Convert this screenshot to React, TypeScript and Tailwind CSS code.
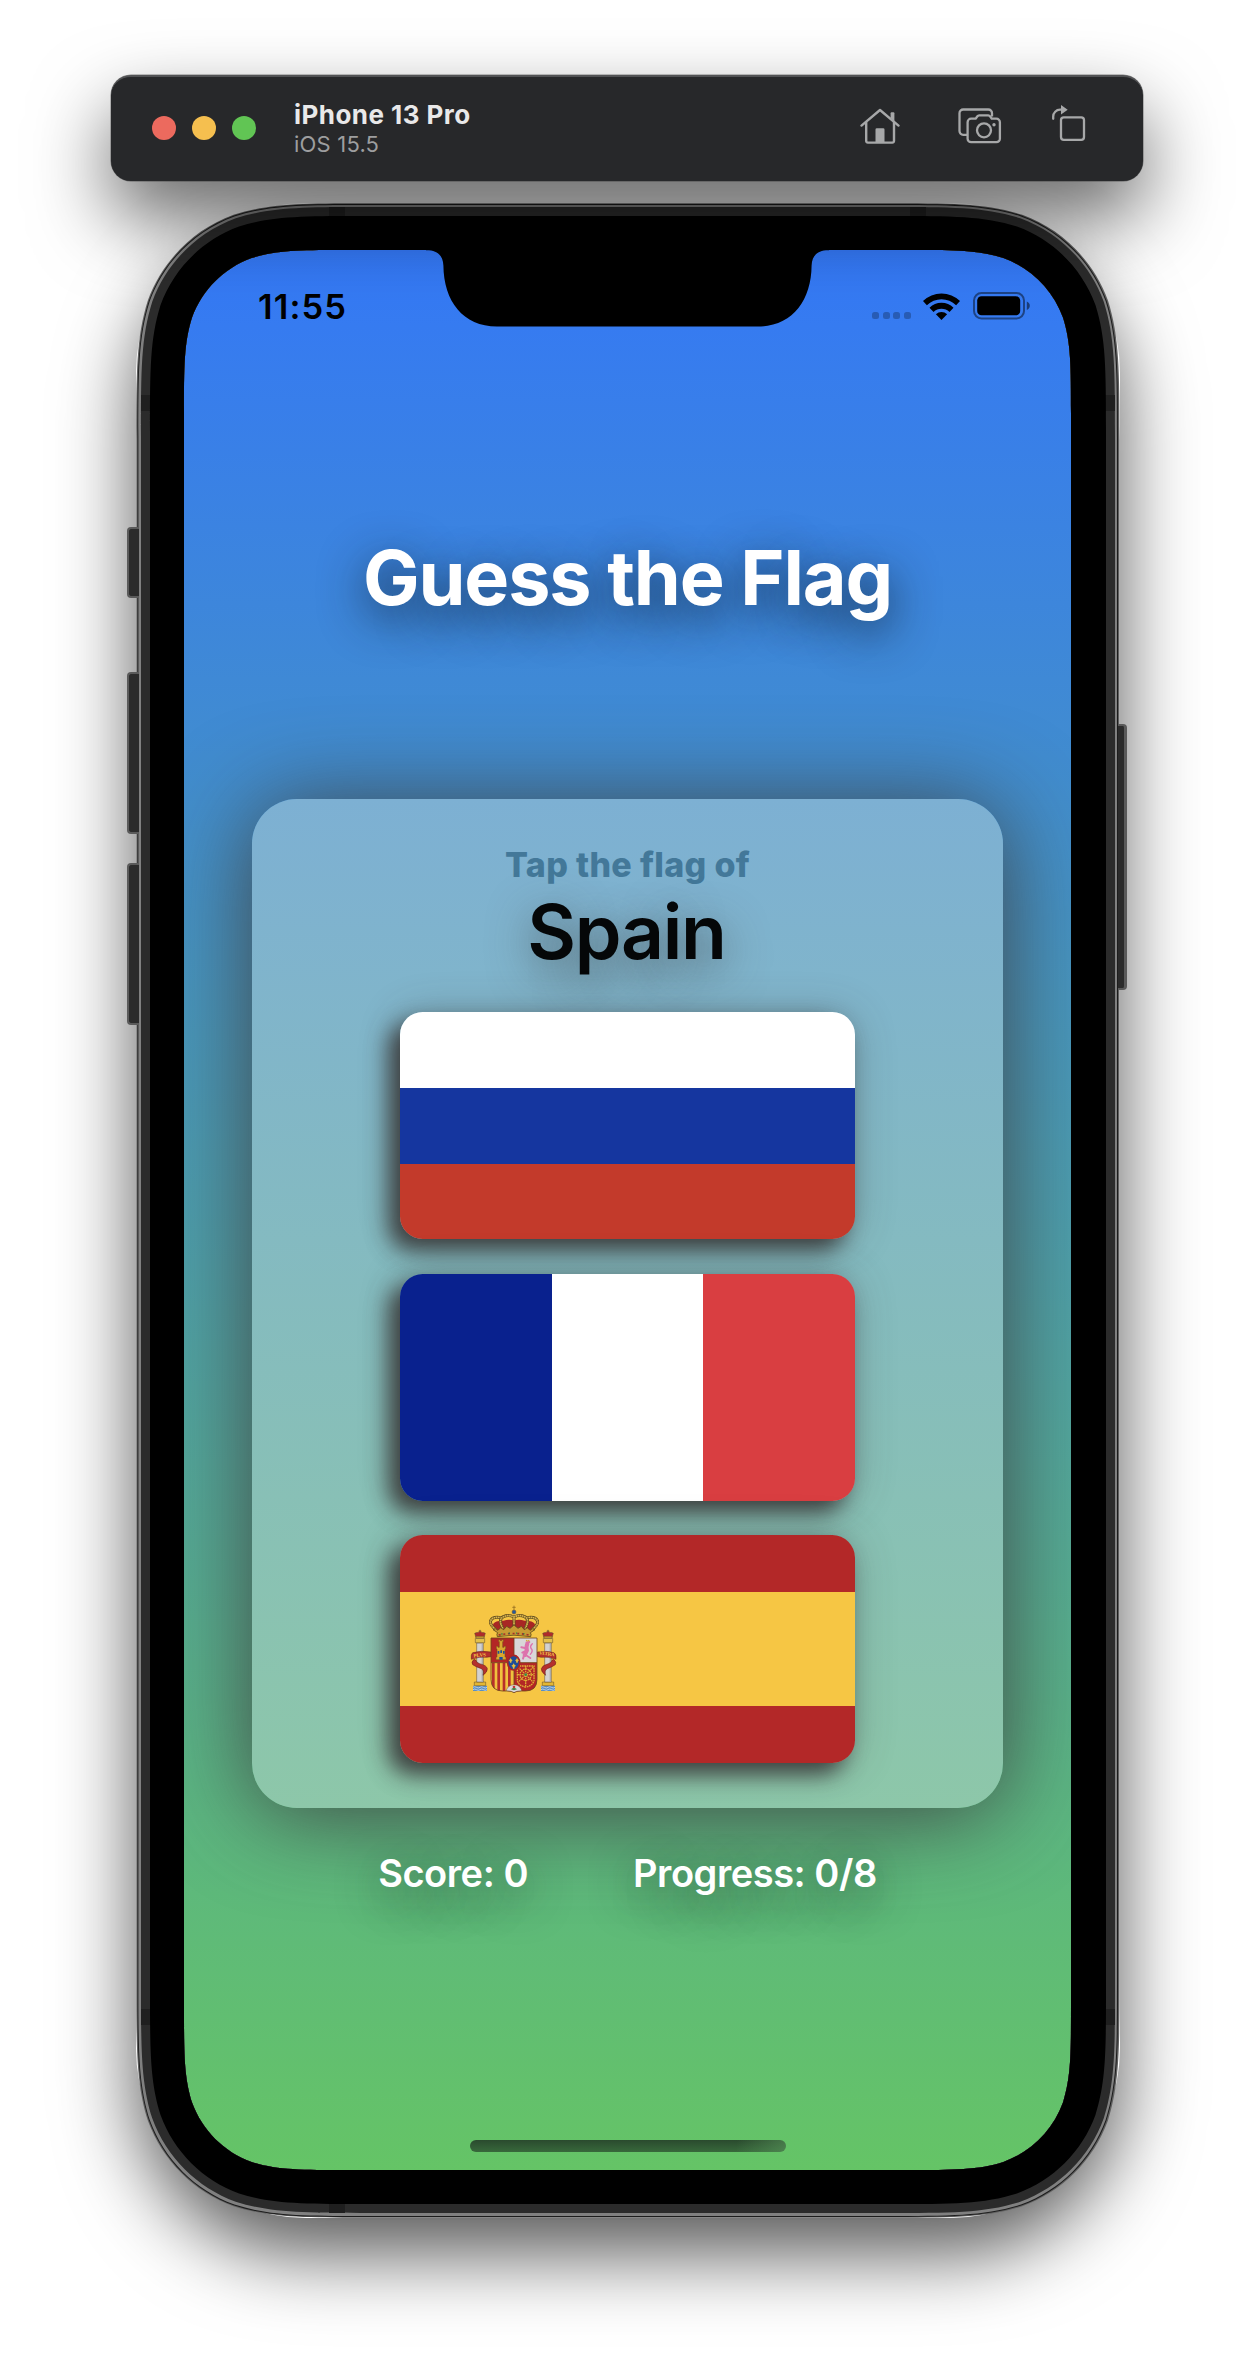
import React from "react";

/** Rounded rectangle with continuous-curvature corners, as used by iOS hardware. */
function squircle(x: number, y: number, w: number, h: number, r: number): string {
  const a = 1.52866498 * r;
  const b = 1.08849296 * r;
  const c = 0.86840694 * r;
  const d = 0.63149379 * r;
  const e = 0.07491139 * r;
  const f = 0.37282383 * r;
  const g = 0.16905956 * r;
  const R = x + w;
  const B = y + h;
  return [
    `M${x + a},${y}H${R - a}`,
    `C${R - b},${y} ${R - c},${y} ${R - d},${y + e}`,
    `C${R - f},${y + g} ${R - g},${y + f} ${R - e},${y + d}`,
    `C${R},${y + c} ${R},${y + b} ${R},${y + a}V${B - a}`,
    `C${R},${B - b} ${R},${B - c} ${R - e},${B - d}`,
    `C${R - g},${B - f} ${R - f},${B - g} ${R - d},${B - e}`,
    `C${R - c},${B} ${R - b},${B} ${R - a},${B}H${x + a}`,
    `C${x + b},${B} ${x + c},${B} ${x + d},${B - e}`,
    `C${x + f},${B - g} ${x + g},${B - f} ${x + e},${B - d}`,
    `C${x},${B - c} ${x},${B - b} ${x},${B - a}V${y + a}`,
    `C${x},${y + b} ${x},${y + c} ${x + e},${y + d}`,
    `C${x + g},${y + f} ${x + f},${y + g} ${x + d},${y + e}`,
    `C${x + c},${y} ${x + b},${y} ${x + a},${y}Z`,
  ].join("");
}

const SCREEN = squircle(48, 47, 887, 1920, 107);

function HomeIcon() {
  return (
    <svg width="40" height="36" viewBox="0 0 40 36" fill="none" stroke="#a7a8a9" strokeWidth="2.4" strokeLinejoin="round" strokeLinecap="round">
      <path d="M1.5 17.6 20 2 38.5 17.6" />
      <path d="M6.2 14.5V33a1.6 1.6 0 0 0 1.6 1.6h24.6A1.6 1.6 0 0 0 34 33V14.5" />
      <path d="M15.5 21.5a1.3 1.3 0 0 1 1.3-1.3h6.4a1.3 1.3 0 0 1 1.3 1.3V35h-9z" fill="#a7a8a9" stroke="none" />
      <path d="M30.6 10V5.2a1 1 0 0 1 1-1h1.8a1 1 0 0 1 1 1v8.4z" fill="#a7a8a9" stroke="none" />
    </svg>
  );
}

function ScreenshotIcon() {
  return (
    <svg width="44" height="36" viewBox="0 0 44 36" fill="none" stroke="#a7a8a9" strokeWidth="2.300" strokeLinejoin="round">
      <path d="M9.5 26.8H5.2A3.7 3.7 0 0 1 1.5 23.100V5.200A3.700 3.700 0 0 1 5.200 1.500H30.300A3.700 3.700 0 0 1 34 5.200V8.500" />
      <path d="M9.600 14.200a3.500 3.500 0 0 1 3.500-3.500h4.600l1.500-2.200c.5-.7 1.200-1.100 2-1.100h9c.8 0 1.500.4 2 1.100l1.500 2.200h4.700a3.500 3.500 0 0 1 3.500 3.500v16.500a3.500 3.500 0 0 1-3.500 3.500H13.100a3.500 3.500 0 0 1-3.500-3.500z" />
      <circle cx="26" cy="22.300" r="7" />
      <circle cx="36" cy="16.700" r="1.700" fill="#a7a8a9" stroke="none" />
    </svg>
  );
}

function RotateIcon() {
  return (
    <svg width="36" height="38" viewBox="0 0 36 38" fill="none" stroke="#a7a8a9" strokeWidth="2.300" strokeLinecap="round">
      <rect x="10" y="14.300" width="23" height="22.500" rx="2.800" />
      <path d="M2.200 15.800V13.500A6.800 6.800 0 0 1 9 6.700h2" />
      <path d="M10 1.900v9.600l6.700-4.800z" fill="#a7a8a9" stroke="none" />
    </svg>
  );
}

function WifiIcon() {
  return (
    <svg width="37" height="27" viewBox="0 0 37 27">
      <path d="M0 8.100a26.500 26.500 0 0 1 37 0l-3.900 4.200a20.800 20.800 0 0 0-29.200 0z" />
      <path d="M6.500 14.700a17.200 17.200 0 0 1 24 0l-4 4.200a11.500 11.500 0 0 0-16 0z" />
      <path d="M12.900 21.200a8.200 8.200 0 0 1 11.200 0L18.500 27z" />
    </svg>
  );
}

function BatteryIcon() {
  return (
    <svg width="58" height="28" viewBox="0 0 58 28">
      <rect x="1" y="1" width="50" height="25.500" rx="7.500" fill="none" stroke="#000" strokeOpacity="0.45" strokeWidth="2" />
      <rect x="4.200" y="4.300" width="43" height="19" rx="4.300" />
      <path d="M53.800 9.600c1.900.8 3 2.300 3 4.100s-1.100 3.400-3 4.200z" fillOpacity="0.5" />
    </svg>
  );
}

function Toolbar() {
  return (
    <header className="z-10 ml-[111px] flex h-[106px] w-[1032px] items-center rounded-[20px] border-t-2 border-[#515254] bg-[#27282a] pb-[2px] pl-[41px] pr-[56px] shadow-[0_0_0_0.5px_rgba(30,30,30,0.5),0_36px_78px_rgba(0,0,0,0.6)]">
      <div className="flex gap-4">
        <span className="size-6 rounded-full bg-[#ec6a5e]" />
        <span className="size-6 rounded-full bg-[#f5bf4f]" />
        <span className="size-6 rounded-full bg-[#61c554]" />
      </div>
      <div className="ml-[38px] flex flex-col pt-[1px]">
        <h1 className="text-[26px] font-bold leading-[30px] tracking-[0.450px] text-[#e9e9e9]">iPhone 13 Pro</h1>
        <p className="text-[22px] leading-[28px] tracking-[0.200px] text-[#9d9e9f]">iOS 15.5</p>
      </div>
      <div className="ml-auto flex items-center pb-[4px]">
        <HomeIcon />
        <div className="ml-[58px] flex">
          <ScreenshotIcon />
        </div>
        <div className="ml-[49px] flex pb-2">
          <RotateIcon />
        </div>
      </div>
    </header>
  );
}

/** Metal frame, black bezel and notch, drawn over the screen content. */
function DeviceFrame() {
  return (
    <svg className="pointer-events-none absolute inset-0" width="984" height="2015" viewBox="0 0 984 2015">
      <path fillRule="evenodd" fill="#5f5f5f" d={squircle(0.3, 0.3, 983.2, 2014.400, 154) + SCREEN} />
      <path fillRule="evenodd" fill="#1c1c1c" d={squircle(1.500, 1, 980.500, 2013, 153) + SCREEN} />
      <path fillRule="evenodd" fill="#808080" d={squircle(2.400, 2, 978.600, 2011, 152) + SCREEN} />
      <path fillRule="evenodd" fill="#2b2b2b" d={squircle(5, 4, 974, 2006, 150) + SCREEN} />
      <g fill="#1f1f1f">
        <rect x="193" y="4" width="16" height="10" />
        <rect x="774" y="4" width="16" height="10" />
        <rect x="193" y="2000" width="16" height="10" />
        <rect x="5" y="192" width="10" height="16" />
        <rect x="969" y="192" width="10" height="16" />
        <rect x="5" y="1806" width="10" height="16" />
        <rect x="969" y="1806" width="10" height="16" />
      </g>
      <path fillRule="evenodd" fill="#000" d={squircle(14, 13, 956, 1988, 141) + SCREEN} />
      <path
        fill="#000"
        d="M290 46V47.200C301 47 307 52 307.400 62.500C307.700 98 327 123.500 361 123.500H622C656 123.500 675.300 98 675.600 62.500C676 52 682 47 693 47.200V46Z"
      />
    </svg>
  );
}

function StatusBar() {
  return (
    <div className="flex h-[113px] items-center pl-[74px] pr-[40px] text-black">
      <span className="pt-[2px] text-[34.500px] font-semibold leading-none tracking-[1.100px]">11:55</span>
      <div className="ml-auto flex items-end pb-[1px]">
        <div className="flex gap-[3.600px] pb-[1px]">
          <span className="size-[7px] rounded-[2.500px] bg-black/25" />
          <span className="size-[7px] rounded-[2.500px] bg-black/25" />
          <span className="size-[7px] rounded-[2.500px] bg-black/25" />
          <span className="size-[7px] rounded-[2.500px] bg-black/25" />
        </div>
        <div className="ml-[12px]">
          <WifiIcon />
        </div>
        <div className="ml-[13px]">
          <BatteryIcon />
        </div>
      </div>
    </div>
  );
}

function Pillar({ x }: { x: number }) {
  return (
    <g transform={`translate(${x} 0)`} stroke="#5c4a2e" strokeWidth="1.500">
      <path d="M-21 318h42v16h-42z" fill="#5b8fc4" stroke="none" />
      <path d="M-21 323q5-4 10.500 0t10.500 0 10.500 0 10.500 0M-21 330q5-4 10.500 0t10.500 0 10.500 0 10.500 0" stroke="#e8eef2" fill="none" strokeWidth="2" />
      <path d="M-17 307h34v11h-34z" fill="#e3b733" />
      <path d="M-10 190h20v117h-20z" fill="#d3d2d0" />
      <path d="M5 191h4v115h-4z" fill="#a9a9ab" stroke="none" />
      <path d="M-14 176h28v13h-28z" fill="#e3c04b" />
      <path d="M-12 174-16 161q6-4 10-2 3-5 6-5t6 5q5-2 10 2l-4 13z" fill="#b02c2b" />
      <path d="M-12 170h24v5h-24z" fill="#dfb02f" />
      <circle cy="154" r="2.500" fill="#cfa22d" />
    </g>
  );
}

function CoatOfArms() {
  return (
    <svg width="90" height="90" viewBox="90 70 270 270">
      <Pillar x={120} />
      <Pillar x={324} />
      {/* Motto ribbons wound round the pillars */}
      <g fill="#b5302d" stroke="#5d1f1b" strokeWidth="1.500">
        <path d="M153 217q-28-5-55 2-6 4-4 20 25-9 46-6l13-2z" />
        <path d="M102 239q-10 9-4 16 8 6 26 12 10 5 5 20 14-10 13-20-2-10-23-15-10-3-11-10z" />
        <path d="M292 217q28-5 50 2 8 4 6 20-25-9-44-6l-12-2z" />
        <path d="M341 239q10 9 5 16-8 6-24 12-10 5-5 20-14-10-13-20 2-10 21-15 10-3 11-10z" />
      </g>
      <g fill="#f0c64a" fontFamily="Liberation Serif, serif" fontWeight="700" fontSize="15">
        <text x="101" y="231" transform="rotate(-6 122 228)">PLVS</text>
        <text x="297" y="227" transform="rotate(7 320 226)" textLength="46">VLTRA</text>
      </g>
      {/* Shield */}
      <clipPath id="shield">
        <path d="M153 175h138v124q0 35-35 35h-12q-16 0-22 5-6-5-22-5h-12q-35 0-35-35z" />
      </clipPath>
      <g clipPath="url(#shield)">
        <path d="M153 175h69v74h-69z" fill="#b32625" />
        <path d="M222 175h69v74h-69z" fill="#d9d7d8" />
        <path d="M153 249h69v95h-69z" fill="#f0c13e" />
        <path d="M160 249v95M176 249v95M192 249v95M208 249v95" stroke="#b8302a" strokeWidth="8" />
        <path d="M222 249h69v95h-69z" fill="#b32625" />
        <path d="M197 340q4-25 25-25t25 25z" fill="#d9d7d8" stroke="#8b5a2b" strokeWidth="1.500" />
      </g>
      <path d="M153 175h138v124q0 35-35 35h-12q-16 0-22 5-6-5-22-5h-12q-35 0-35-35zM222 175v74M153 249h138M222 249v67" fill="none" stroke="#70431f" strokeWidth="2.500" />
      {/* Castle */}
      <g fill="#d9a72f" stroke="#71511d" strokeWidth="1.500">
        <path d="M168 240v-8h3v-24h-2v-8h5v3h4v-17h-2v-6h5v3h4v-3h5v6h-2v17h4v-3h5v8h-2v24h3v8z" />
        <path d="M178 232h10v8h-10z" fill="#1c4f9c" stroke="none" />
        <path d="M173 214h5v8h-5zM181 212h5v8h-5zM189 214h5v8h-5z" fill="#1c4f9c" stroke="none" />
      </g>
      {/* Lion */}
      <g fill="none" stroke="#dd73ad" strokeLinecap="round" strokeLinejoin="round">
        <path d="M262 192q-5 13-1 20l-7 14" strokeWidth="12" />
        <path d="M258 206l-14-3M259 213l-12 6M257 226l14 9M253 225l-4 12M268 187l-8 2" strokeWidth="6" />
        <path d="M271 224q10-10 2-18-4-7 4-14" strokeWidth="4" />
      </g>
      <path d="M257 185l2-5 4 3 4-3 2 5z" fill="#d5a32b" />
      {/* Chains of Navarre */}
      <g stroke="#dfae35" fill="none" strokeWidth="4" strokeDasharray="5 2">
        <path d="M232 259h50v45q-5 15-25 18-20-3-25-18z" />
        <circle cx="257" cy="285" r="17" />
        <path d="M257 259v62M232 285h50M234 262l46 46M280 262l-46 46" />
      </g>
      <circle cx="257" cy="285" r="4" fill="#3a8a4a" />
      {/* Pomegranate */}
      <path d="M222 331v-8" stroke="#3a7a3f" strokeWidth="3" />
      <path d="M213 329l9-6 9 6-9 3z" fill="#3f8847" />
      <circle cx="222" cy="322" r="4" fill="#c33a35" />
      {/* Bourbon escutcheon */}
      <ellipse cx="221" cy="249" rx="18" ry="22" fill="#1d4d98" stroke="#a92523" strokeWidth="5" />
      <g fill="#e9bb3e">
        <path d="M212 235l3 5 3 2-3 2-1 5h-4l-1-5-3-2 3-2zM231 235l3 5 3 2-3 2-1 5h-4l-1-5-3-2 3-2zM221 251l3 5 4 2-4 3-1 6h-4l-1-6-4-3 4-2z" />
      </g>
      {/* Crown */}
      <path d="M168 154q-12-12-8-22 7-10 30-9 18-6 32 0 14-6 32 0 23-1 30 9 4 10-8 22z" fill="#a82624" />
      <g fill="none" stroke="#5f4a1d" strokeWidth="9">
        <path d="M168 150q-20-15-16-27 6-13 30-9M276 150q20-15 16-27-6-13-30-9" />
        <path d="M189 147q-16-27 1-36 16-7 32 1 16-8 32-1 17 9 1 36M222 146v-38" />
      </g>
      <g fill="none" stroke="#d9b650" strokeWidth="5">
        <path d="M168 150q-20-15-16-27 6-13 30-9M276 150q20-15 16-27-6-13-30-9" strokeDasharray="5 1.500" />
        <path d="M189 147q-16-27 1-36 16-7 32 1 16-8 32-1 17 9 1 36M222 146v-38" strokeDasharray="5 1.500" />
      </g>
      <path d="M172 171q-3-8 1-12l-14-9 8-3 7 5 8-8 9 6 9-10 10 6 12-10 12 10 10-6 9 10 9-6 8 8 7-5 8 3-14 9q4 4 1 12-50-9-100 0z" fill="#c79a33" stroke="#5f4a1d" strokeWidth="2.500" />
      <path d="M176 166q46-9 92 0" stroke="#a52c2b" strokeWidth="5" strokeDasharray="6 8" fill="none" />
      <path d="M184 163q38-6 80 1" stroke="#2d7d4a" strokeWidth="4" strokeDasharray="4 18" fill="none" />
      <circle cx="222" cy="97" r="6" fill="#27599b" stroke="#7a5a20" strokeWidth="1.500" />
      <path d="M222 91V78M217 83h10" stroke="#a27a25" strokeWidth="3" />
    </svg>
  );
}

const FLAG_SHELL =
  "h-[227.400px] w-[455px] overflow-hidden rounded-[22.700px] shadow-[-11px_11px_22px_rgba(58,58,58,0.95),0_2px_40px_rgba(64,64,64,0.3)]";

function RussiaFlag() {
  return (
    <button aria-label="Russia" className={`${FLAG_SHELL} flex flex-col`}>
      <span className="w-full flex-1 bg-white" />
      <span className="w-full flex-1 bg-[#15369f]" />
      <span className="w-full flex-1 bg-[#c33a2b]" />
    </button>
  );
}

function FranceFlag() {
  return (
    <button aria-label="France" className={`${FLAG_SHELL} flex`}>
      <span className="h-full flex-1 bg-[#09218e]" />
      <span className="h-full flex-1 bg-white" />
      <span className="h-full flex-1 bg-[#d93e41]" />
    </button>
  );
}

function SpainFlag() {
  return (
    <button aria-label="Spain" className={`${FLAG_SHELL} flex flex-col`}>
      <span className="h-1/4 w-full bg-[#b32828]" />
      <span className="flex h-1/2 w-full items-start bg-[#f6c644] pl-[70px] pt-[10.500px]">
        <CoatOfArms />
      </span>
      <span className="h-1/4 w-full bg-[#b32828]" />
    </button>
  );
}

function FlagCard() {
  return (
    <section className="ml-[68px] mt-[122px] flex h-[1009px] w-[751px] flex-col items-center rounded-[45px] bg-linear-to-b/srgb from-[#7db0d3] to-[#8dc7a9] shadow-[0_6px_92px_rgba(62,62,62,0.92)]">
      <p className="mt-[45px] text-[34px] font-extrabold leading-[41px] tracking-[0.350px] text-[#437899]">Tap the flag of</p>
      <h3 className="-ml-[2px] mt-px text-[75px] font-semibold leading-[92px] tracking-[-1.300px] text-[#050708] [text-shadow:0_12px_44px_rgba(64,64,64,0.75)]">Spain</h3>
      <div className="mt-[34px] flex flex-col gap-[34.200px]">
        <RussiaFlag />
        <FranceFlag />
        <SpainFlag />
      </div>
    </section>
  );
}

function Screen() {
  return (
    <main className="flex h-[1920px] w-[887px] flex-col overflow-hidden bg-linear-to-b/srgb from-[#3478f6] to-[#65c466]">
      <StatusBar />
      <h2 className="mt-[170px] text-center text-[75.500px] font-bold leading-[90px] tracking-[-1.150px] text-white [text-shadow:0_12px_46px_rgba(15,30,45,0.9)]">
        Guess the Flag
      </h2>
      <div className="mt-[54px]">
        <FlagCard />
      </div>
      <div className="mt-[42px] flex justify-center gap-[105px] text-[38px] font-semibold leading-[46px] tracking-[-0.450px] text-white [text-shadow:0_12px_44px_rgba(30,50,40,0.8)]">
        <span>Score: 0</span>
        <span>Progress: 0/8</span>
      </div>
      <div className="mb-[18px] mt-auto h-3 w-[316px] self-center rounded-full bg-[linear-gradient(100deg,transparent_84%,rgba(90,150,92,0.6)),linear-gradient(180deg,#2a4a2e,#38683b)]" />
    </main>
  );
}

function Phone() {
  return (
    <div className="relative ml-[136px] mt-[22px] h-[2015px] w-[984px]">
      {/* Side buttons */}
      <div className="absolute left-[-9px] top-[324px] z-10 flex flex-col">
        <span className="h-[71px] w-[12px] rounded-l-[4px] border-2 border-r-0 border-[#5a5a5a] bg-[#2b2b2b]" />
        <span className="mt-[74px] h-[162px] w-[12px] rounded-l-[4px] border-2 border-r-0 border-[#5a5a5a] bg-[#2b2b2b]" />
        <span className="mt-[29px] h-[162px] w-[12px] rounded-l-[4px] border-2 border-r-0 border-[#5a5a5a] bg-[#2b2b2b]" />
      </div>
      <span className="absolute right-[-6.500px] top-[521px] z-10 h-[266px] w-[9px] rounded-r-[4px] border-2 border-l-0 border-r-[3px] border-[#5a5a5a] bg-[#2b2b2b]" />
      <div className="relative h-full w-full rounded-[170px] pl-[48px] pt-[47px] shadow-[0_36px_78px_rgba(0,0,0,0.65)]">
        <Screen />
        <DeviceFrame />
      </div>
    </div>
  );
}

export default function App() {
  return (
    <div className="flex h-[2368px] w-[1254px] flex-col overflow-hidden bg-white pt-[75px] font-['Inter',sans-serif]">
      <Toolbar />
      <Phone />
    </div>
  );
}
